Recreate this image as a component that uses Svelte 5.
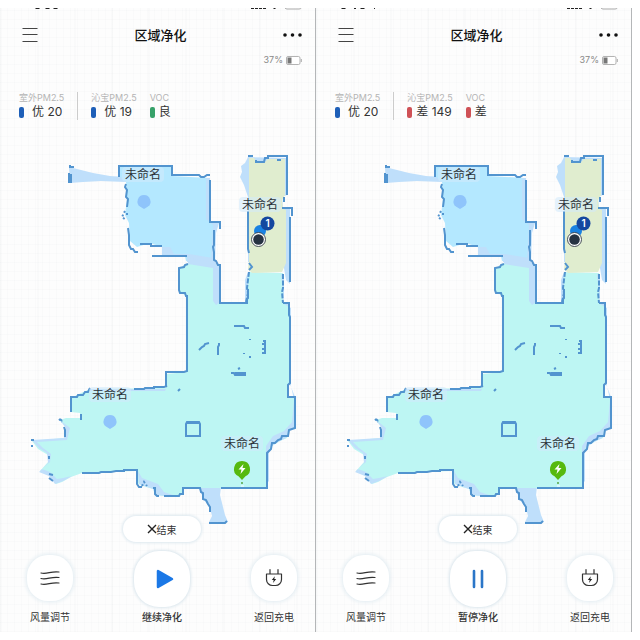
<script>
  const phones = [
    {
      running: false,
      action: '继续净化',
      metrics: [
        { label: '室外PM2.5', level: '优', value: '20', tone: 'blue', gap: 'wide' },
        { label: '沁宝PM2.5', level: '优', value: '19', tone: 'blue', gap: 'wide' },
        { label: 'VOC', level: '良', value: '', tone: 'green', gap: 'tight' }
      ]
    },
    {
      running: true,
      action: '暂停净化',
      metrics: [
        { label: '室外PM2.5', level: '优', value: '20', tone: 'blue', gap: 'wide' },
        { label: '沁宝PM2.5', level: '差', value: '149', tone: 'red', gap: 'tight' },
        { label: 'VOC', level: '差', value: '', tone: 'red', gap: 'tight' }
      ]
    }
  ];

  const roomLabels = [
    { x: 143, y: 175 },
    { x: 260, y: 205 },
    { x: 110, y: 395 },
    { x: 242, y: 444 }
  ];
</script>

<main>
  {#each phones as phone}
    <section class="phone">
      <svg class="status" viewBox="0 0 307 3" aria-hidden="true">
        <g fill="#222">
          {#if phone.running}
            <path d="M17 0h5l-1 1h-3zM30 0h2v1h-2zM36 0h5l-1 1h-3zM50 0h1v1h-1z" />
          {:else}
            <path d="M27 0h5l-1 1h-3zM37 0h5l-1 1h-3zM45 0h5l-1 1h-3z" />
          {/if}
          <path d="M243 0h3v1h-3zM247 0h3v1h-3zM251 0h3v1h-3zM255 0h3v1h-3zM265 0h3l-1 1h-1z" />
        </g>
        <path d="M277 0q1 1 2 1h12q2 0 2-1" fill="none" stroke="#aaa" />
      </svg>

      <header>
        <button class="plain" aria-label="菜单">
          <svg width="16" height="16" viewBox="0 0 16 16"><path d="M.5 1.500h15M.5 7.500h15M.5 14.500h15" stroke="#444" stroke-width="1.100" /></svg>
        </button>
        <h1>区域净化</h1>
        <button class="plain" aria-label="更多">
          <svg width="20" height="16" viewBox="0 0 20 16" fill="#111"><circle cx="2" cy="8" r="1.800" /><circle cx="9.500" cy="8" r="1.800" /><circle cx="17" cy="8" r="1.800" /></svg>
        </button>
      </header>

      <div class="battery">
        <span>37%</span>
        <svg width="16" height="9" viewBox="0 0 16 9"><rect x=".5" y=".5" width="13.500" height="8" rx="1.500" fill="#fff" stroke="#aaa" stroke-width=".9" /><path d="M1.500 1.500h4v6h-4z" fill="#777" /><path d="M15.300 3v3" stroke="#aaa" /></svg>
      </div>

      <div class="metrics">
        {#each phone.metrics as m}
          <div class="metric">
            <div class="name">{m.label}</div>
            <div class="reading {m.gap}"><i class={m.tone}></i><span>{m.level} {m.value}</span></div>
          </div>
        {/each}
      </div>

      <svg class="map" viewBox="8 150 307 364" role="img" aria-label="区域地图">
        <path class="edge" d="M69 168l4 0 8 2 12 3 17 3 16 1v5l-25-1-18 1-13 1z" />
        <path class="edge" d="M248 157L245 163 241 166 242 172 240 177 244 185 248 197 248 262 283 262 286 280 290 284 290 209 283 207 282 197 287 195 287 158z" />
        <path class="edge" d="M199 487h22l-1 8 3 12 2 8 3 7h-19l3-6-2-8-6-8-3-7z" />

        <path fill="#b4e8ff" d="M120 167h52v9l37 2v44l9 1-3 10v30l-29-2-1-5h-23v-9l-12-4-13 4-7-6-1-18-4-8 2-16-1-17-7-6z" />
        <path class="edge" d="M206 178h4v44l9 1-3 10-1 31-4-2 2-37-7-6z" />
        <path class="edge" d="M162 247v9h25v6l29 2-3-6-24-4-15 0-4-7z" />

        <path fill="#bdf6f3" d="M180 268L188 263 216 266 219 270 219 303 247 303 248 272 283 273 283 303 289 303 289 384 288 397 295 397 295 428 288 431 287 438 280 441 272 446 268 455 268 488 200 488 183 489 183 495 164 496 155 495 153 489 143 486 137 483 136 471 82 473 71 477 62 482 56 484 50 476 40 471 48 462 48 455 38 449 32 441 64 438 66 428 60 420 66 418 80 418 80 413 71 412 71 398 81 393 90 389 166 388 166 374 187 372 187 296 179 292z" />
        <path class="edge" d="M188 258l28 5 3 3v37l-3 2-3-4v-33l-25-4zM245 280l3-8v31h-3zM281 274h3v29l6 1v80l5 13v30l-7 4-2 7-8 4-9 6v34l-3-3v-33l7-10 11-5 8-9 2-22-3-14V308l-7-4z" />
        <path class="edge" d="M60 420l6 8-2 10-32 2 7 8 8 5 1 10-9 9 10 4 6 8 8-3 9-5-9 2-6 1-7-7-8-3 8-7 1-8-8-6-6-6 30-2 3-12zM138 471l1 13 14 5 3 6 10 1 7-1-9-3-6-8-8-3-8-3zM90 389h40l36 0-1 2H88z" />
        <path fill="#e0edcf" d="M249 158h5l3 5h7l4-4h17v36l-3 5 1 9 3 1v53l-4 9-30 1-4-4 1-8V210l0-32z" />

        <g class="wall">
          <path d="M70 165v2h4M69 173v9h2v-8M119 176v-10h53v9h27l2 2h3l3-2h3M210 180v42h10v7M214 230v15l-1 2 1 5v8l2 1 2 4h2v38h27v-4l1-1v-9M119 177v-3" />
          <path d="M126 184l-1 3 2 3-1 7 2 2-1 8M128 228l1 7v10l2 4 2 0 2 3h3M140 244h11v2h11M152 256h35" />
          <path stroke-dasharray="2 2" d="M125 211l-3 6 4 3M126 214h2" />
          <path d="M248 156h5M256 160v2h8l1-4h3v-2h19v39M284 197v5M282 208h10v8M290 217v65M248 211v38l1 4M249 263l3 4-3 3M277 160h4" />
          <path stroke-dasharray="5 1.500" d="M249 272l-1 8-1 8 1 5-2 9M283 274v14l-1 4 1 11" />
          <path d="M283 303h6v12l1 2v66l-2 2v12h7v31l-6 2-1 6h-6l-1 3-3 1-3 3h-3l-1 6-4 4v35h-46M188 264l-3 1-1 2-5 1v22l1 3h5l1 3h1v75l-3 1h-18v14h1l-3 1h-10v1h-9l-1 1h-10" />
          <path d="M90 388l-2 4h-3l-2 3h-5l-1 2h-6v15M81 414v6M64 427l1 3v7M60 419l2 2M31 440h3M32 445v2M49 456v3M49 474l4 1M49 478l4 3M82 473h17l2-1h10l5-1h8v-1h13v14l2 3h3M153 488h2v6l2 2h2M164 496h15l1-2h3v-6h17l1 4 2 1v6l3 1 2 4 2 3v5M209 523h16l2-2" />
          <path stroke-dasharray="2 2" d="M142 486l2-4 3 4M59 419l3 3" />
          <path d="M234 326h10l1 2h4M199 350l3-3 2-1 1-2 4-1M219 343v2l-1 2v8M263 341h2v12h-3M262 344h3M262 349h3M231 373h3l1 2h10v-3M235 373h10M238 369l2-1M250 339v1M244 353v1M250 356v2M178 391l2-2" />
          <path d="M186 424v12h14v-12l-1-2h-12zM187 423h13" />
        </g>

        {#each roomLabels as room}
          <rect x={room.x - 21} y={room.y - 8} width="42" height="15" rx="4" fill="#d2e9fb" opacity=".55" />
        {/each}

        <g fill="#8fc4fb">
          <path d="M144 195a6.500 6.500 0 0 1 4 11.600l-4 2.400-4-2.400a6.500 6.500 0 0 1 4-11.600z" />
          <path d="M110 415a6.500 6.500 0 0 1 4 11.600l-4 2.400-4-2.400a6.500 6.500 0 0 1 4-11.600z" />
        </g>

        <path d="M242 461a8 8 0 0 1 3.500 15.200L242 480l-3.500-3.800A8 8 0 0 1 242 461z" fill="#56b90f" />
        <path d="M243.500 464l-5 5.500h3l-1 4.500 5-6h-3z" fill="#fff" />
        <circle cx="242" cy="483" r=".9" fill="#4d9c32" />
        <path d="M241 486h3" stroke="#e6fbff" stroke-width="1.500" />

        <circle cx="260" cy="231" r="6" fill="#1a82e2" />
        <path d="M258 232l8-8" stroke="#1a82e2" stroke-width="6" />
        <circle cx="267.500" cy="223.500" r="7" fill="#15479f" />
        <circle cx="258.500" cy="239.500" r="7" fill="#fff" stroke="#333c49" stroke-width=".9" />
        <circle cx="258.500" cy="239.500" r="5.300" fill="#263242" />
        <text class="badge" x="267.500" y="227">1</text>

        {#each roomLabels as room}
          <text class="room" x={room.x} y={room.y + 4}>未命名</text>
        {/each}
      </svg>

      <button class="finish">
        <svg width="10" height="10" viewBox="0 0 10 10"><path d="M1 1l8 8M9 1L1 9" stroke="#222" stroke-width="1.400" /></svg>结束
      </button>

      <footer>
        <button class="control">
          <span class="disc">
            <svg width="20" height="16" viewBox="0 0 20 16" fill="none" stroke="#333" stroke-width="1.200" stroke-linecap="round"><path d="M1 3c6 1.800 10-2.300 18-1M1 8.500c6 1.800 10-2.300 18-1M1 14c6 1.800 10-2.300 18-1" /></svg>
          </span>
          风量调节
        </button>
        <button class="control primary">
          <span class="disc">
            {#if phone.running}
              <svg width="20" height="20" viewBox="0 0 20 20"><path d="M6 2v16M14 2v16" stroke="#2b76c8" stroke-width="2.600" stroke-linecap="round" /></svg>
            {:else}
              <svg class="play" width="20" height="20" viewBox="0 0 20 20"><path d="M3 2v16l14-8z" fill="#1b78e6" stroke="#1b78e6" stroke-width="2.500" stroke-linejoin="round" /></svg>
            {/if}
          </span>
          {phone.action}
        </button>
        <button class="control">
          <span class="disc">
            <svg width="18" height="20" viewBox="0 0 18 20" fill="none" stroke="#333" stroke-width="1.200" stroke-linecap="round" stroke-linejoin="round"><path d="M5 1.500V6M13 1.500V6M1.500 6h15v5.500a6 6 0 0 1-6 6h-3a6 6 0 0 1-6-6z" /><path d="M9.800 8.300l-3 3.700h1.900l-.7 3 3.200-4H9.300z" fill="#222" stroke="none" /></svg>
          </span>
          返回充电
        </button>
      </footer>
    </section>
  {/each}
</main>

<style>
  :global(body) {
    margin: 0;
    background: #fff;
  }
  main {
    display: grid;
    grid-template-columns: 1fr 1fr;
    padding: 8px 8px 8px 0;
    font-family: Inter, "Liberation Sans", "Noto Sans CJK SC", sans-serif;
    color: #333;
  }
  .phone {
    display: flex;
    flex-direction: column;
    box-sizing: border-box;
    padding: 0 0 7px 8px;
    border-right: 1px solid #b4b6b8;
    background:
      repeating-linear-gradient(90deg, rgba(40, 60, 80, 0.014) 0 1px, transparent 1px 7px),
      repeating-linear-gradient(0deg, rgba(40, 60, 80, 0.014) 0 1px, transparent 1px 9px),
      repeating-linear-gradient(90deg, rgba(40, 60, 80, 0.014) 0 2px, transparent 2px 37px),
      #fdfdfd;
  }
  svg {
    display: block;
  }
  .status {
    width: 100%;
  }
  button {
    font: inherit;
    color: inherit;
    border: 0;
    margin: 0;
    padding: 0;
    cursor: pointer;
  }
  .plain {
    background: none;
  }
  header {
    display: flex;
    align-items: center;
    justify-content: space-between;
    margin-top: 14px;
    padding: 0 12px 0 14px;
  }
  h1 {
    margin: 0;
    font-size: 13px;
    line-height: 20px;
    font-weight: 500;
    color: #111;
  }
  .battery {
    display: flex;
    align-items: center;
    justify-content: flex-end;
    gap: 3px;
    margin-top: 9px;
    padding-right: 13px;
    font-size: 9px;
    line-height: 12px;
    color: #888;
  }
  .metrics {
    display: flex;
    margin-top: 26px;
    padding-left: 11px;
  }
  .metric {
    padding-right: 13px;
  }
  .metric:first-child {
    border-right: 1px solid #ccc;
    margin-right: 13px;
  }
  .name {
    font-size: 9px;
    line-height: 12px;
    color: #b4b4b4;
    white-space: nowrap;
  }
  .reading {
    display: flex;
    align-items: center;
    font-size: 12px;
    line-height: 16px;
    white-space: nowrap;
  }
  .wide {
    gap: 8px;
  }
  .tight {
    gap: 4px;
  }
  .reading i {
    width: 5px;
    height: 11px;
    border-radius: 2px;
  }
  .blue {
    background: #1e5fb8;
  }
  .green {
    background: #37a169;
  }
  .red {
    background: #cf5156;
  }
  .map {
    width: 100%;
    margin-top: 30px;
    overflow: visible;
  }
  .edge {
    fill: #bfdffb;
  }
  .wall {
    fill: none;
    stroke: #5294cf;
    stroke-width: 2;
  }
  .room {
    font-size: 12px;
    text-anchor: middle;
    fill: #2b3137;
  }
  .badge {
    font-size: 10px;
    font-weight: 600;
    text-anchor: middle;
    fill: #fff;
  }
  .finish {
    position: relative;
    align-self: center;
    display: flex;
    align-items: center;
    justify-content: center;
    width: 78px;
    height: 26px;
    margin-top: 2px;
    border-radius: 13px;
    background: #fff;
    box-shadow: 0 0 3px 1px #dce8ef;
    font-size: 10px;
  }
  footer {
    display: flex;
    align-items: flex-end;
    justify-content: space-between;
    margin-top: 9px;
    padding: 0 18px 0 19px;
  }
  .control {
    display: flex;
    flex-direction: column;
    align-items: center;
    gap: 8px;
    background: none;
    font-size: 10px;
    line-height: 16px;
    white-space: nowrap;
  }
  .disc {
    display: grid;
    place-items: center;
    width: 46px;
    height: 46px;
    border-radius: 21px;
    background: #fff;
    box-shadow: 0 0 4px 1px #e0ebf1;
  }
  .primary {
    gap: 2px;
    font-weight: 500;
  }
  .primary .disc {
    width: 56px;
    height: 56px;
    border-radius: 25px;
    box-shadow: 0 0 3px 1px #dae6ed;
  }
  .play {
    margin-left: 5px;
  }
</style>
